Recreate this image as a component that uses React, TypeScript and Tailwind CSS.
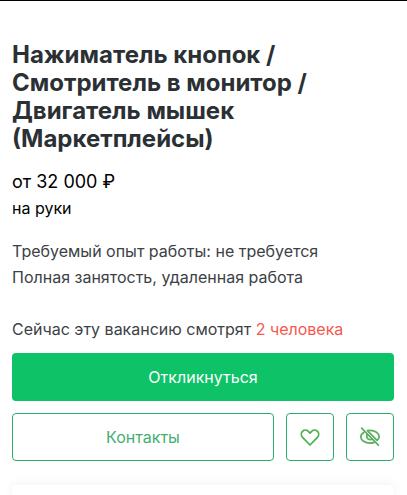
import { useState } from "react";

const HeartIcon = () => (
    <svg className="w-6 h-6" viewBox="0 0 24 24" fill="none" stroke="#4caf50" strokeWidth="1.7" strokeLinejoin="round">
        <path d="M12 20 L4.6 12.4 C2.9 10.6 2.9 8 4.5 6.4 C6.1 4.8 8.7 4.8 10.3 6.4 L12 8.1 L13.7 6.4 C15.3 4.8 17.9 4.8 19.5 6.4 C21.1 8 21.1 10.6 19.4 12.4 Z" />
    </svg>
)

const HiddenIcon = () => (
    <svg className="w-6 h-6" viewBox="0 0 24 24" fill="none" stroke="#5cae5f" strokeWidth="1.7" strokeLinecap="round" strokeLinejoin="round">
        <path d="M3.6 3.2 L20.4 20.2" />
        <path d="M5.8 7.4 C3.9 8.5 2.8 10.1 2.8 11.8 C2.8 15.2 7 18.2 12 18.2 C13.6 18.2 15 17.9 16.2 17.4" />
        <path d="M9.4 5.6 C10.2 5.4 11.1 5.3 12 5.3 C17 5.3 21.2 8.2 21.2 11.8 C21.2 13.2 20.4 14.4 19.1 15.3 Z" />
        <path d="M9.2 9.4 C8.4 11.2 8.8 13 10.2 14 C11.4 14.8 12.8 14.8 13.9 14.2" />
    </svg>
)

const App = () => {
    const [favorite, setFavorite] = useState<boolean>(false);
    const [hidden, setHidden] = useState<boolean>(false);

    return (
        <main className="w-full overflow-hidden border-t border-black bg-white pl-3 pr-[13px] pt-10 font-['Inter',sans-serif] text-base leading-[26px] text-[#3c4145]">
            <h1 className="text-2xl leading-7 font-bold text-[#2b3034]">
                Нажиматель кнопок / Смотритель в монитор / Двигатель мышек (Маркетплейсы)
            </h1>

            {/*Salary*/}
            <div className="mt-4 text-black">
                <p className="text-lg leading-[26px]">от 32 000 ₽</p>
                <p>на руки</p>
            </div>

            {/*Conditions*/}
            <div className="mt-[17px]">
                <p>Требуемый опыт работы: не требуется</p>
                <p>Полная занятость, удаленная работа</p>
            </div>
            <p className="mt-[26px]">
                Сейчас эту вакансию смотрят <span className="text-[#f4594e]">2 человека</span>
            </p>

            {/*Actions*/}
            <div className="mt-[11px] flex flex-col gap-3">
                <button type="button" className="w-full h-12 rounded bg-[#0dc267] text-white cursor-pointer">
                    Откликнуться
                </button>
                <div className="flex flex-row gap-3">
                    <button type="button" className="grow h-12 rounded border border-[#2aad6e] text-[#3fb072] cursor-pointer">
                        Контакты
                    </button>
                    <button type="button" aria-label="В избранное" aria-pressed={favorite}
                        className="w-12 h-12 flex items-center justify-center rounded border border-[#2aad6e] cursor-pointer"
                        onClick={() => setFavorite(!favorite)}
                    >
                        <HeartIcon />
                    </button>
                    <button type="button" aria-label="Скрыть вакансию" aria-pressed={hidden}
                        className="w-12 h-12 flex items-center justify-center rounded border border-[#2aad6e] cursor-pointer"
                        onClick={() => setHidden(!hidden)}
                    >
                        <HiddenIcon />
                    </button>
                </div>
            </div>

            {/*Next card*/}
            <section className="mt-6 h-[10px] rounded-t bg-white shadow-[0_0_12px_0_rgba(0,0,0,0.07)]"></section>
        </main>
    )
}

export default App
